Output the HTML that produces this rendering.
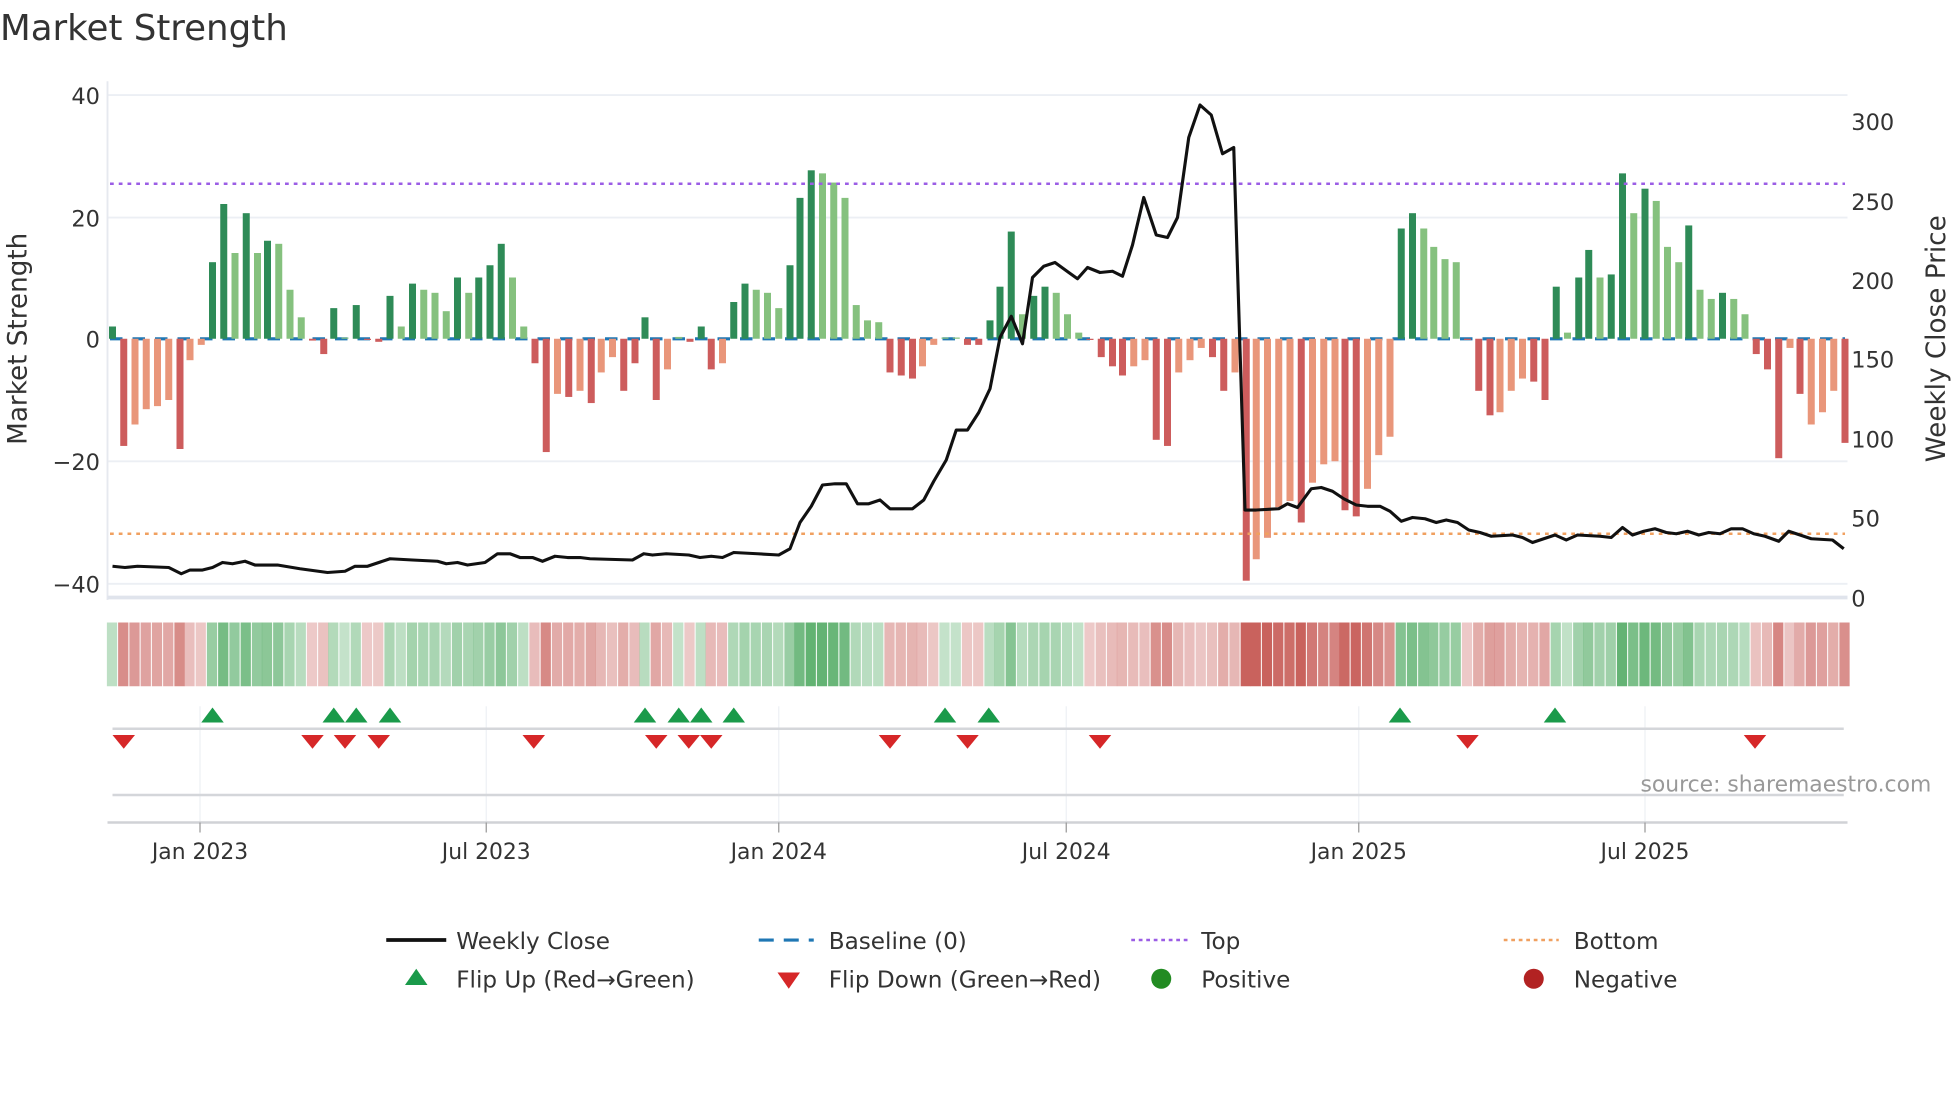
<!DOCTYPE html>
<html><head><meta charset="utf-8">
<style>
html,body{margin:0;padding:0;background:#fff;}
svg{display:block;font-family:"DejaVu Sans","Liberation Sans",sans-serif;}
</style></head>
<body>
<svg id="s" width="1960" height="1102" viewBox="0 0 1568 881.6" xmlns="http://www.w3.org/2000/svg">
<rect width="1568" height="882" fill="#fff"/>
<text x="0" y="32" font-size="28.5" fill="#333">Market Strength</text>
<g stroke="#eceff4" stroke-width="1.5">
<line x1="86" y1="76" x2="1478" y2="76"/>
<line x1="86" y1="174" x2="1478" y2="174"/>
<line x1="86" y1="369" x2="1478" y2="369"/>
<line x1="86" y1="467" x2="1478" y2="467"/>
</g>
<line x1="86" y1="65" x2="86" y2="480" stroke="#e6e9ef" stroke-width="1.5"/>
<line x1="86" y1="478" x2="1478" y2="478" stroke="#e0e4ec" stroke-width="3"/>
<g font-size="18" fill="#333" text-anchor="end">
<text x="80" y="83">40</text><text x="80" y="181">20</text><text x="80" y="278">0</text>
<text x="80" y="376">−20</text><text x="80" y="474">−40</text>
</g>
<g font-size="18" fill="#333">
<text x="1481" y="104">300</text><text x="1481" y="168">250</text><text x="1481" y="231">200</text>
<text x="1481" y="294">150</text><text x="1481" y="358">100</text><text x="1481" y="421">50</text><text x="1481" y="485">0</text>
</g>
<text transform="translate(21,271) rotate(-90)" font-size="21" fill="#333" text-anchor="middle">Market Strength</text>
<text transform="translate(1556,271) rotate(-90)" font-size="21" fill="#333" text-anchor="middle">Weekly Close Price</text>
<line x1="88" y1="271" x2="1476" y2="271" stroke="#1f77b4" stroke-width="2.5" stroke-dasharray="10,8"/>
<g id="bars"></g>
<line x1="88" y1="147" x2="1476" y2="147" stroke="#9b5de5" stroke-width="2" stroke-dasharray="3,4"/>
<line x1="88" y1="427" x2="1476" y2="427" stroke="#f0a060" stroke-width="2" stroke-dasharray="3,4"/>
<polyline id="price" fill="none" stroke="#111" stroke-width="2.5" stroke-linejoin="round"/>
<g id="strip"></g>
<g stroke="#eef0f4" stroke-width="1">
<line x1="160" y1="565" x2="160" y2="658"/><line x1="389" y1="565" x2="389" y2="658"/>
<line x1="623" y1="565" x2="623" y2="658"/><line x1="853" y1="565" x2="853" y2="658"/>
<line x1="1087" y1="565" x2="1087" y2="658"/><line x1="1316" y1="565" x2="1316" y2="658"/>
</g>
<line x1="90" y1="583" x2="1475" y2="583" stroke="#d4d6da" stroke-width="2"/>
<line x1="90" y1="636" x2="1475" y2="636" stroke="#d4d6da" stroke-width="2"/>
<g id="mk"></g>
<text x="1545" y="633" font-size="17.5" fill="#999" text-anchor="end">source: sharemaestro.com</text>
<line x1="86" y1="658" x2="1478" y2="658" stroke="#d0d2d6" stroke-width="2"/>
<g stroke="#999" stroke-width="1">
<line x1="160" y1="658" x2="160" y2="666"/><line x1="389" y1="658" x2="389" y2="666"/>
<line x1="623" y1="658" x2="623" y2="666"/><line x1="853" y1="658" x2="853" y2="666"/>
<line x1="1087" y1="658" x2="1087" y2="666"/><line x1="1316" y1="658" x2="1316" y2="666"/>
</g>
<g font-size="17.5" fill="#333" text-anchor="middle">
<text x="160" y="687">Jan 2023</text><text x="389" y="687">Jul 2023</text><text x="623" y="687">Jan 2024</text>
<text x="853" y="687">Jul 2024</text><text x="1087" y="687">Jan 2025</text><text x="1316" y="687">Jul 2025</text>
</g>
<g font-size="18.5" fill="#333">
<line x1="309" y1="752" x2="357" y2="752" stroke="#111" stroke-width="3"/>
<text x="365" y="759">Weekly Close</text>
<line x1="607" y1="752" x2="651" y2="752" stroke="#1f77b4" stroke-width="2.5" stroke-dasharray="12,8"/>
<text x="663" y="759">Baseline (0)</text>
<line x1="905" y1="752" x2="950" y2="752" stroke="#9b5de5" stroke-width="2" stroke-dasharray="3,3"/>
<text x="961" y="759">Top</text>
<line x1="1203" y1="752" x2="1247" y2="752" stroke="#f0a060" stroke-width="2" stroke-dasharray="3,3"/>
<text x="1259" y="759">Bottom</text>
<polygon points="333,775 342,788 324,788" fill="#1a9a4a"/>
<text x="365" y="790">Flip Up (Red→Green)</text>
<polygon points="622,778 640,778 631,791" fill="#d62728"/>
<text x="663" y="790">Flip Down (Green→Red)</text>
<circle cx="929" cy="783" r="8" fill="#228b22"/>
<text x="961" y="790">Positive</text>
<circle cx="1227" cy="783" r="8" fill="#b22222"/>
<text x="1259" y="790">Negative</text>
</g>
</svg>
<script>
var B=[[90,2,'D'],[99,-17.5,'R'],[108,-14,'S'],[117,-11.5,'S'],[126,-11,'S'],[135,-10,'S'],[144,-18,'R'],[152,-3.5,'S'],[161,-1,'S'],
[170,12.5,'D'],[179,22,'D'],[188,14,'L'],[197,20.5,'D'],[206,14,'L'],[214,16,'D'],[223,15.5,'L'],[232,8,'L'],[241,3.5,'L'],[250,-0.3,'R'],
[259,-2.5,'R'],[267,5,'D'],[276,0.2,'L'],[285,5.5,'D'],[294,-0.2,'R'],[303,-0.5,'R'],[312,7,'D'],[321,2,'L'],[330,9,'D'],[339,8,'L'],
[348,7.5,'L'],[357,4.5,'L'],[366,10,'D'],[375,7.5,'L'],[383,10,'D'],[392,12,'D'],[401,15.5,'D'],[410,10,'L'],[419,2,'L'],[428,-4,'R'],
[437,-18.5,'R'],[446,-9,'S'],[455,-9.5,'R'],[464,-8.5,'S'],[473,-10.5,'R'],[481,-5.5,'S'],[490,-3,'S'],[499,-8.5,'R'],[508,-4,'R'],
[516,3.5,'D'],[525,-10,'R'],[534,-5,'S'],[543,0.3,'L'],[552,-0.5,'R'],[561,2,'D'],[569,-5,'R'],[578,-4,'S'],[587,6,'D'],[596,9,'D'],
[605,8,'L'],[614,7.5,'L'],[623,5,'L'],[632,12,'D'],[640,23,'D'],[649,27.5,'D'],[658,27,'L'],[667,25.5,'L'],[676,23,'L'],[685,5.5,'L'],
[694,3,'L'],[703,2.7,'L'],[712,-5.5,'R'],[721,-6,'R'],[730,-6.5,'R'],[738,-4.5,'S'],[747,-1,'S'],[756,0.2,'L'],[765,0.2,'L'],[774,-1,'R'],
[783,-1,'R'],[792,3,'D'],[800,8.5,'D'],[809,17.5,'D'],[818,4,'L'],[827,7,'D'],[836,8.5,'D'],[845,7.5,'L'],[854,4,'L'],[863,1,'L'],[872,-0.2,'R'],
[881,-3,'R'],[890,-4.5,'R'],[898,-6,'R'],[907,-4.5,'S'],[916,-3.5,'S'],[925,-16.5,'R'],[934,-17.5,'R'],[943,-5.5,'S'],[952,-3.5,'S'],
[961,-1.5,'S'],[970,-3,'R'],[979,-8.5,'R'],[988,-5.5,'S'],[997,-39.5,'R'],[1005,-36,'S'],[1014,-32.5,'S'],[1023,-27.5,'S'],[1032,-26.5,'S'],
[1041,-30,'R'],[1050,-23.5,'S'],[1059,-20.5,'S'],[1068,-20,'S'],[1076,-28,'R'],[1085,-29,'R'],[1094,-24.5,'S'],[1103,-19,'S'],[1112,-16,'S'],
[1121,18,'D'],[1130,20.5,'D'],[1139,18,'L'],[1147,15,'L'],[1156,13,'L'],[1165,12.5,'L'],[1174,-0.2,'R'],[1183,-8.5,'R'],[1192,-12.5,'R'],
[1200,-12,'S'],[1209,-8.5,'S'],[1218,-6.5,'S'],[1227,-7,'R'],[1236,-10,'R'],[1245,8.5,'D'],[1254,1,'L'],[1263,10,'D'],
[1271,14.5,'D'],[1280,10,'L'],[1289,10.5,'D'],[1298,27,'D'],[1307,20.5,'L'],[1316,24.5,'D'],[1325,22.5,'L'],[1334,15,'L'],[1343,12.5,'L'],
[1351,18.5,'D'],[1360,8,'L'],[1369,6.5,'L'],[1378,7.5,'D'],[1387,6.5,'L'],[1396,4,'L'],[1405,-2.5,'R'],[1414,-5,'R'],[1423,-19.5,'R'],
[1432,-1.5,'S'],[1440,-9,'R'],[1449,-14,'S'],[1458,-12,'S'],[1467,-8.5,'S'],[1476,-17,'R']];
var C={D:'#2e8b57',L:'#85c17e',R:'#cd5c5c',S:'#e9967a'};
var ns='http://www.w3.org/2000/svg',g=document.getElementById('bars'),st=document.getElementById('strip');
function el(p,t,a){var e=document.createElementNS(ns,t);for(var k in a)e.setAttribute(k,a[k]);p.appendChild(e);return e;}
B.forEach(function(b,i){var x=b[0],v=b[1],h=Math.abs(v)*4.9;
 el(g,'rect',{x:x-2.8,y:v>0?271-h:271,width:5.6,height:Math.max(h,0.8),fill:C[b[2]]});
 var t=Math.min(Math.abs(v)/30,1),col=v>=0?'rgba(60,160,80,'+(0.3+0.55*t)+')':'rgba(195,80,75,'+(0.3+0.6*t)+')';
 el(st,'rect',{x:x-4.5,y:498,width:8.2,height:51,fill:col});});
var P="90,453 100,454 110,453 135,454 145,459 152,456 162,456 170,454 178,450 186,451 196,449 204,452 222,452 240,455 262,458 276,457 284,453 294,453 312,447 330,448 350,449 357,451 366,450 374,452 388,450 398,443 408,443 416,446 426,446 434,449 444,445 454,446 464,446 472,447 506,448 515,443 522,444 533,443 551,444 560,446 569,445 578,446 587,442 606,443 623,444 632,439 640,418 649,405 658,388 668,387 677,387 686,403 695,403 704,400 712,407 730,407 739,400 747,385 757,368 765,344 774,344 783,330 792,311 800,270 809,253 818,275 826,222 835,213 844,210 855,218 862,223 870,214 880,218 890,217 898,221 906,196 915,158 925,188 934,190 942,174 951,110 960,84 969,92 978,123 987,118 996,408 1005,408 1023,407 1030,403 1038,406 1049,391 1057,390 1066,393 1075,399 1085,404 1094,405 1104,405 1112,409 1121,417 1130,414 1140,415 1149,418 1157,416 1166,418 1175,424 1184,426 1193,429 1210,428 1218,430 1226,434 1235,431 1244,428 1253,432 1262,428 1280,429 1289,430 1298,422 1306,428 1315,425 1324,423 1333,426 1341,427 1350,425 1359,428 1367,426 1376,427 1385,423 1394,423 1403,427 1412,429 1423,433 1431,425 1440,428 1449,431 1466,432 1475,439";
document.getElementById('price').setAttribute('points',P);
var mk=document.getElementById('mk');
[170,267,285,312,516,543,561,587,756,791,1120,1244].forEach(function(x){el(mk,'polygon',{points:x+',566 '+(x+9)+',578 '+(x-9)+',578',fill:'#1a9a4a'});});
[99,250,276,303,427,525,551,569,712,774,880,1174,1404].forEach(function(x){el(mk,'polygon',{points:(x-9)+',588 '+(x+9)+',588 '+x+',599',fill:'#d62728'});});
</script>
</body></html>
